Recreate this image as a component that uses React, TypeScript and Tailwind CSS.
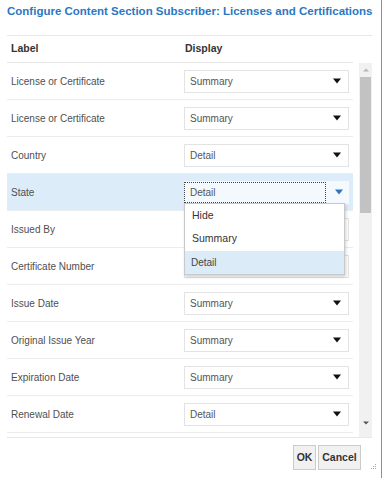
const rows: { label: string; value: string }[] = [
  { label: 'License or Certificate', value: 'Summary' },
  { label: 'License or Certificate', value: 'Summary' },
  { label: 'Country', value: 'Detail' },
  { label: 'State', value: 'Detail' },
  { label: 'Issued By', value: 'Summary' },
  { label: 'Certificate Number', value: 'Summary' },
  { label: 'Issue Date', value: 'Summary' },
  { label: 'Original Issue Year', value: 'Summary' },
  { label: 'Expiration Date', value: 'Summary' },
  { label: 'Renewal Date', value: 'Detail' },
];

const OPEN_ROW = 3;

function Caret({ color }: { color: string }) {
  return (
    <svg width="8" height="6" viewBox="0 0 8 6">
      <path d="M0 0.5 H8 L4 5.5 Z" fill={color} />
    </svg>
  );
}

function Select({ value, open }: { value: string; open: boolean }) {
  if (open) {
    return (
      <div className="relative flex h-[23px] w-[165px] items-center bg-[#f4f9fe]">
        <div className="flex h-[21px] w-[142px] items-center border border-dotted border-[#444] pl-[5px] text-[10px] text-[#555]">
          {value}
        </div>
        <div className="flex flex-1 items-center justify-center pl-[2px]">
          <Caret color="#2a78c2" />
        </div>
        {/* dropdown list */}
        <div className="absolute left-0 top-[22px] z-10 w-[161px] border border-[#c9c9c9] bg-white shadow-[1px_2px_3px_rgba(0,0,0,0.18)]">
          <div className="flex h-[24px] items-center pl-[7px] text-[10.5px] text-[#333]">Hide</div>
          <div className="flex h-[23px] items-center pl-[7px] text-[10.5px] text-[#333]">Summary</div>
          <div className="flex h-[23px] items-center bg-[#dcebf8] pl-[6px] text-[10px] text-[#444]">Detail</div>
        </div>
      </div>
    );
  }
  return (
    <div className="flex h-[23px] w-[165px] items-center justify-between border border-[#e3e3e3] bg-white pl-[5px] pr-[7px] text-[10px] text-[#555]">
      <span>{value}</span>
      <Caret color="#111" />
    </div>
  );
}

export default function App() {
  return (
    <div
      className="relative h-[478px] w-[382px] overflow-hidden border-r border-[#8f8f8f] bg-white pl-[7px] pr-[9px]"
      style={{ fontFamily: '"Liberation Sans", Arial, sans-serif' }}
    >
      {/* title */}
      <div className="h-[35px] pt-[4px] text-[11.5px] font-bold leading-[14px] text-[#2b78c3] whitespace-nowrap">
        Configure Content Section Subscriber: Licenses and Certifications
      </div>

      <div className="border-t border-[#e8e8e8]">
        <div className="flex h-[27px] w-[346px] items-center border-b border-[#e8e8e8] text-[10.5px] font-bold text-[#333]">
          <div className="w-[177px] pl-[4px]">Label</div>
          <div className="pl-[1px]">Display</div>
        </div>

        <div className="flex h-[374px] gap-[6px]">
          <div className="w-[346px]">
            {rows.map((r, i) => (
              <div
                key={i}
                className={`flex h-[37px] items-center border-b border-[#ececec] ${i === OPEN_ROW ? 'bg-[#ddecf9]' : ''}`}
              >
                <div className="w-[177px] pl-[4px] text-[10px] text-[#4f4f4f]">{r.label}</div>
                <Select value={r.value} open={i === OPEN_ROW} />
              </div>
            ))}
          </div>

          {/* scrollbar */}
          <div className="flex w-[13px] flex-col items-center bg-[#f1f1f1]">
            <div className="flex h-[14px] items-center justify-center">
              <svg width="6" height="4" viewBox="0 0 6 4">
                <path d="M0 3.5 H6 L3 0.5 Z" fill="#b5b5b5" />
              </svg>
            </div>
            <div className="h-[136px] w-[11px] bg-[#c2c2c2]" />
            <div className="flex-1" />
            <div className="mb-[10px] flex h-[8px] items-center justify-center">
              <svg width="6" height="4" viewBox="0 0 6 4">
                <path d="M0 0.5 H6 L3 3.5 Z" fill="#555" />
              </svg>
            </div>
          </div>
        </div>

        {/* footer */}
        <div className="flex justify-end gap-[2px] border-t border-[#e8e8e8] pr-[11px] pt-[7px]">
          <button className="h-[25px] w-[23px] border border-[#cbcbcb] bg-[#f1f1f1] text-[10.5px] font-bold text-[#333]">
            OK
          </button>
          <button className="h-[25px] w-[43px] border border-[#cbcbcb] bg-[#f1f1f1] text-[10.5px] font-bold text-[#333]">
            Cancel
          </button>
        </div>
      </div>

      {/* resize grip */}
      <svg className="absolute bottom-[8px] right-[4px]" width="7" height="7" viewBox="0 0 7 7">
        <rect x="5" y="1" width="1" height="1" fill="#aaa" />
        <rect x="3" y="3" width="1" height="1" fill="#aaa" />
        <rect x="5" y="3" width="1" height="1" fill="#aaa" />
        <rect x="1" y="5" width="1" height="1" fill="#aaa" />
        <rect x="3" y="5" width="1" height="1" fill="#aaa" />
        <rect x="5" y="5" width="1" height="1" fill="#aaa" />
      </svg>
    </div>
  );
}
